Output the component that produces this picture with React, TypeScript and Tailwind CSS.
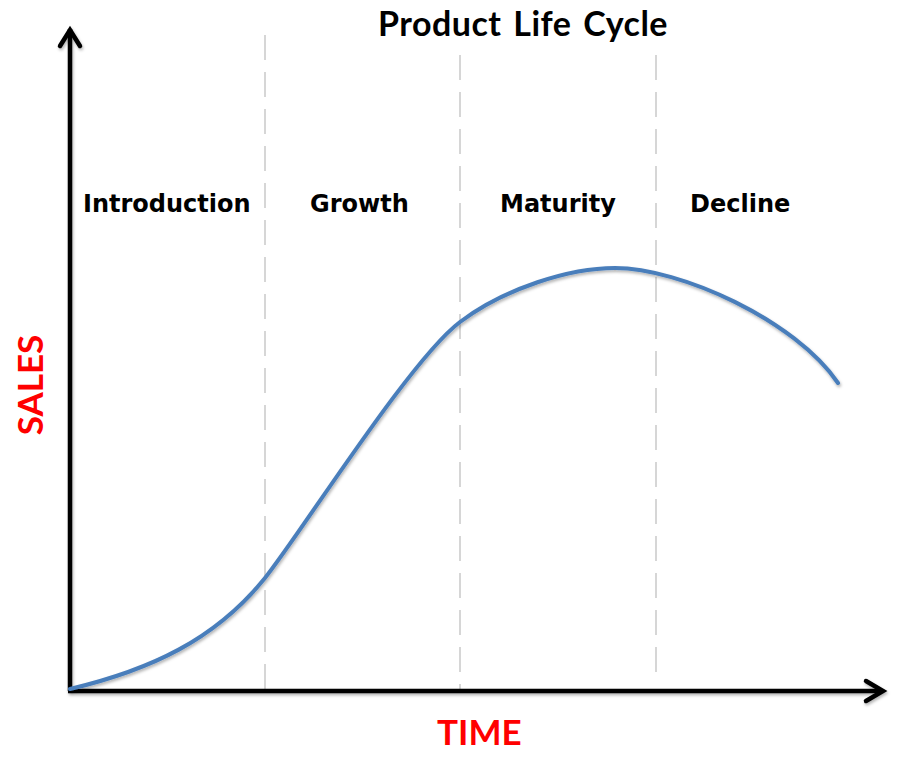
import React from "react"

// sales curve as hand-fitted cubic segments
const curve = [
  "M 70 689",
  "C 150 670, 215 640, 265 578",
  "C 300 534.6, 410 359.5, 460 322",
  "C 505 288, 570 268, 615 268",
  "C 680 268, 795 320, 838 383",
].join(" ")

const dividers = [
  { x: 265, top: 35, bottom: 690 },
  { x: 460, top: 55, bottom: 690 },
  { x: 656, top: 55, bottom: 678 },
]

const phases = [
  { label: "Introduction", left: "left-[83px]" },
  { label: "Growth", left: "left-[310px]" },
  { label: "Maturity", left: "left-[500px]" },
  { label: "Decline", left: "left-[690px]" },
]

export default function App() {
  return (
    <div className="relative w-[905px] h-[762px] bg-white overflow-hidden">
      <svg className="absolute inset-0" width="905" height="762" viewBox="0 0 905 762">
        <defs>
          <filter id="shadow" x="-10%" y="-10%" width="120%" height="120%">
            <feDropShadow dx="1" dy="2" stdDeviation="1.5" floodColor="#000" floodOpacity="0.3" />
          </filter>
        </defs>

        {dividers.map((d) => (
          <line
            key={d.x}
            x1={d.x}
            y1={d.top}
            x2={d.x}
            y2={d.bottom}
            stroke="#d6d6d6"
            strokeWidth="2"
            strokeDasharray="25 12"
          />
        ))}

        {/* axes */}
        <g stroke="#000" strokeWidth="4.5" fill="none" filter="url(#shadow)">
          <line x1="70" y1="29" x2="70" y2="691" />
          <polyline points="60,46 70,30 80,46" strokeLinejoin="miter" strokeLinecap="round" />
          <line x1="68" y1="691" x2="882" y2="691" />
          <polyline points="866,681 883,691 866,701" strokeLinejoin="miter" strokeLinecap="round" />
        </g>

        <path d={curve} stroke="#4a7ebb" strokeWidth="4" fill="none" strokeLinecap="round" filter="url(#shadow)" />
      </svg>

      <div className="absolute left-[378px] top-[6px] text-[34px] leading-none font-bold tracking-[0.5px] [word-spacing:3px] text-black font-['Lato',sans-serif] whitespace-nowrap">
        Product Life Cycle
      </div>

      {phases.map((p) => (
        <div
          key={p.label}
          className={`absolute ${p.left} top-[192px] text-[24px] leading-none font-bold text-black font-['DejaVu_Sans',sans-serif] whitespace-nowrap`}
        >
          {p.label}
        </div>
      ))}

      <div className="absolute left-[29px] top-[385px] -translate-x-1/2 -translate-y-1/2 -rotate-90 text-[35px] leading-none font-bold text-[#ff0000] font-['Lato',sans-serif] whitespace-nowrap">
        SALES
      </div>

      <div className="absolute left-[437px] top-[714px] text-[35px] leading-none font-bold text-[#ff0000] font-['Lato',sans-serif] whitespace-nowrap">
        TIME
      </div>
    </div>
  )
}
